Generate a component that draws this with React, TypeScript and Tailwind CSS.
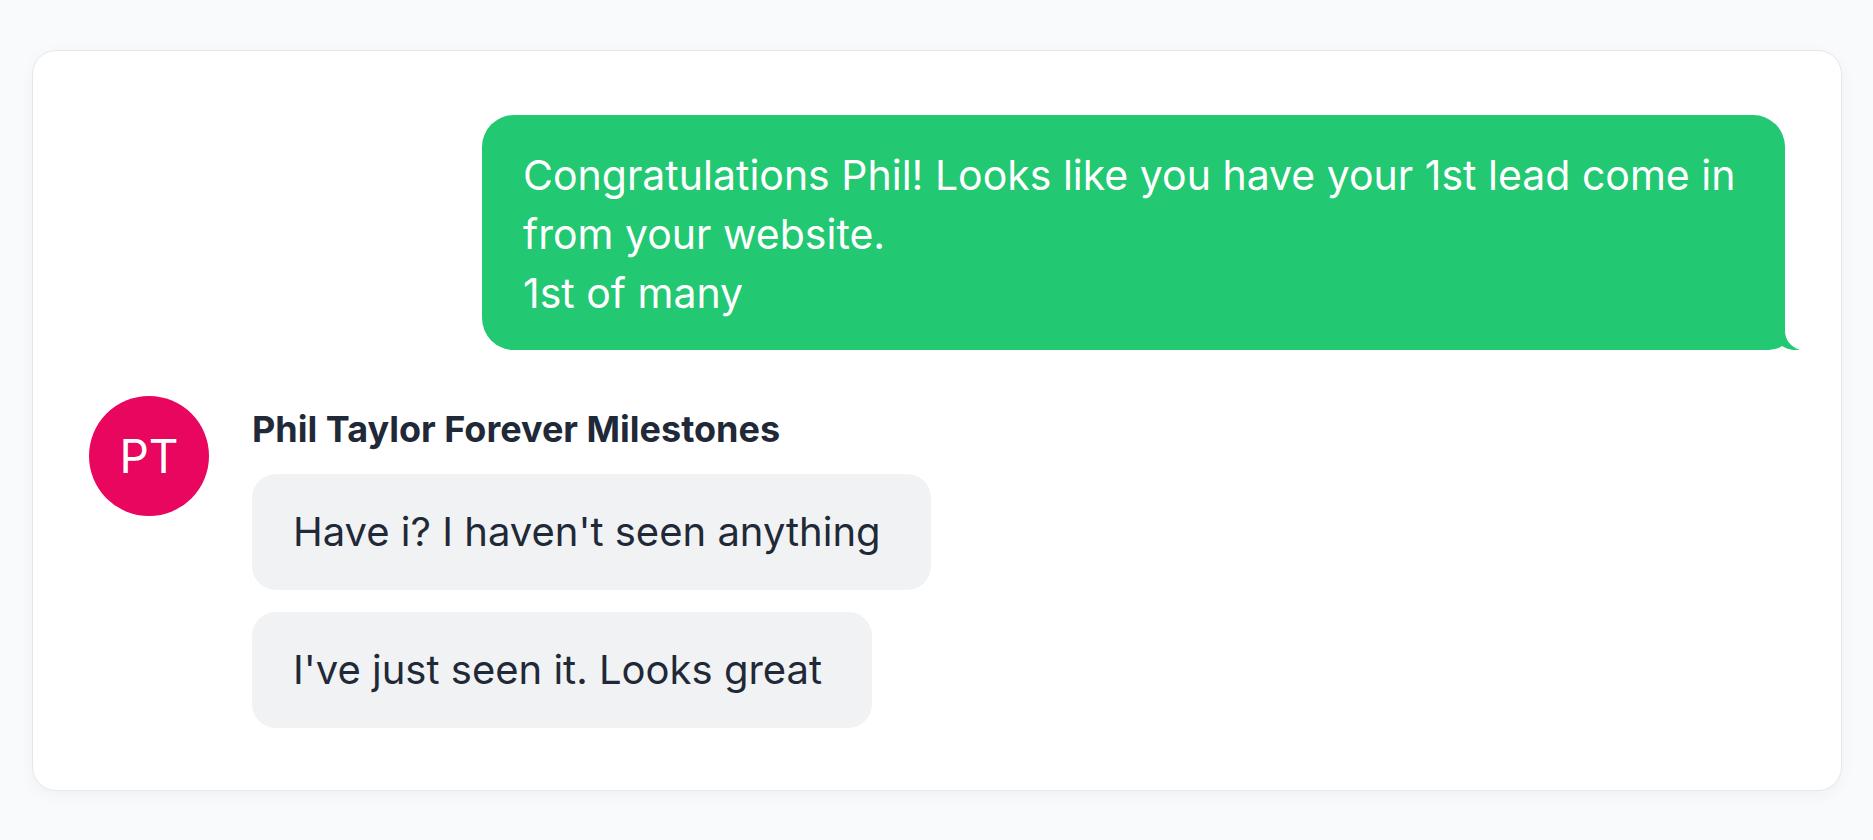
import React from 'react';

const GREEN = '#22c872';

const BubbleTail: React.FC = () => (
  <svg
    className="absolute right-[-15px] bottom-0"
    width="35"
    height="26"
    viewBox="0 0 35 26"
    fill={GREEN}
  >
    <path d="M0 0 H20 V7 C20 16 26 23 35 26 C28 26.6 22 25.2 17 22 C13 25 8 26 0 26 Z" />
  </svg>
);

const IncomingBubble: React.FC<{ text: string }> = ({ text }) => (
  <div className="w-fit rounded-[24px] bg-[#f1f2f4] pl-[41px] pr-[50px] py-[29px] text-[40px] leading-[58px] text-[#1f2937]">
    {text}
  </div>
);

const App: React.FC = () => {
  return (
    <div
      className="min-h-screen bg-[#f9fafb] px-[32px] pt-[50px]"
      style={{ fontFamily: 'Inter, "Noto Sans", sans-serif' }}
    >
      <div className="w-[1810px] rounded-[24px] border border-[#e6e7ea] bg-white px-[56px] pt-[64px] pb-[62px] shadow-[0_4px_16px_rgba(0,0,0,0.04)]">
        {/* outgoing */}
        <div className="flex justify-end">
          <div className="relative max-w-[1303px] rounded-[32px] rounded-br-[20px] bg-[#22c872] pl-[41px] pr-[30px] pt-[31px] pb-[27px] text-[41px] leading-[59px] text-white">
            Congratulations Phil! Looks like you have your 1st lead come in from your website.
            <br />
            1st of many
            <BubbleTail />
          </div>
        </div>

        {/* incoming */}
        <div className="mt-[46px] flex gap-[43px]">
          <div className="flex h-[120px] w-[120px] shrink-0 items-center justify-center rounded-full bg-[#e8065f] text-[46px] text-white">
            PT
          </div>
          <div className="flex flex-col pt-[13px]">
            <div className="text-[36px] font-bold leading-[40px] text-[#1f2937]">
              Phil Taylor Forever Milestones
            </div>
            <div className="mt-[25px] flex flex-col gap-[22px]">
              <IncomingBubble text="Have i? I haven't seen anything" />
              <IncomingBubble text="I've just seen it. Looks great" />
            </div>
          </div>
        </div>
      </div>
    </div>
  );
};

export default App;
